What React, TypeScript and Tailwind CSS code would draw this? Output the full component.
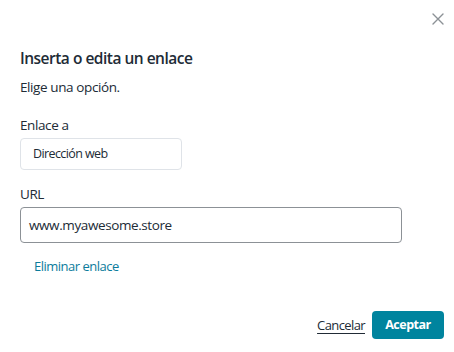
import React from "react";

const CloseIcon: React.FC = () => (
    <svg width="12" height="12" viewBox="0 0 12 12" fill="none">
        <path d="M1 1L11 11M11 1L1 11" stroke="#8c9196" strokeWidth="1.4" strokeLinecap="round" />
    </svg>
);

const App: React.FC = () => {
    return (
        <div className="w-[454px] h-[352px] bg-white flex flex-col font-['Open_Sans',sans-serif] text-[#212b36]">
            {/* Header */}
            <div className="flex justify-end pt-[13px] pr-[10px] h-[46px]">
                <button className="w-[12px] h-[12px] flex items-center justify-center">
                    <CloseIcon />
                </button>
            </div>

            {/* Body */}
            <div className="px-5 flex flex-col">
                <h2 className="text-[15.5px] leading-6 font-semibold tracking-[-0.5px]">Inserta o edita un enlace</h2>
                <p className="mt-[7px] text-[13.5px] leading-5 tracking-[-0.4px]">Elige una opción.</p>

                <label className="mt-[18px] text-[13.5px] leading-5 tracking-[-0.4px]">Enlace a</label>
                <div className="mt-[3px] w-[162px] h-[32px] border border-[#dfe3e8] rounded flex items-center pl-3 text-[12.5px] tracking-[-0.6px]">
                    Dirección web
                </div>

                <label className="mt-[14px] text-[13.5px] leading-5 tracking-[-0.4px]">URL</label>
                <div className="mt-[3px] w-[382px] h-[36px] border border-[#8c9196] rounded flex items-center pl-2 text-[13.5px] tracking-[-0.4px]">
                    www.myawesome.store
                </div>

                <button className="mt-[13px] self-start pl-[14px] text-[13px] leading-5 tracking-[-0.5px] text-[#0b7c9c]">
                    Eliminar enlace
                </button>
            </div>

            {/* Footer */}
            <div className="mt-auto flex justify-end items-center gap-[7px] pr-[10px] pb-[13px]">
                <button className="text-[13px] leading-5 tracking-[-0.6px] underline underline-offset-[3px] decoration-[#212b36]">
                    Cancelar
                </button>
                <button className="w-[72px] h-[28px] rounded bg-[#00849e] text-white text-[12.5px] font-bold tracking-[-0.5px]">
                    Aceptar
                </button>
            </div>
        </div>
    );
};

export default App;
